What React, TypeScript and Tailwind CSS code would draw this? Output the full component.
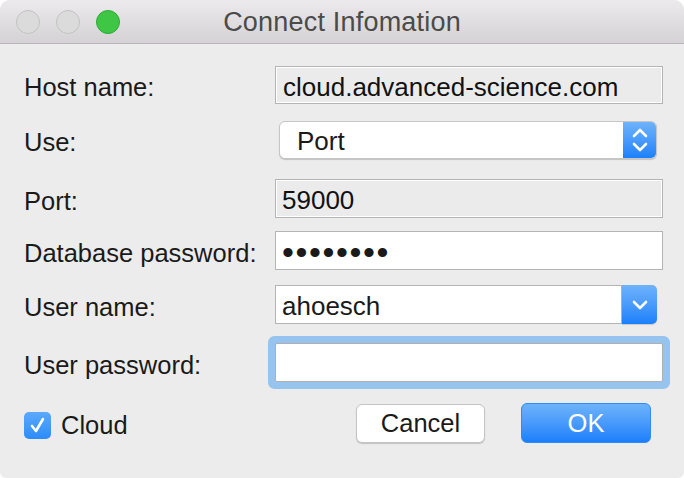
import React from 'react';

const font = "font-['Liberation_Sans','Helvetica_Neue',Arial,sans-serif]";

const Label: React.FC<{ children: React.ReactNode }> = ({ children }) => (
    <div className="w-[251px] mt-[6px] text-[25.5px] leading-none text-[#1a1a1a] whitespace-nowrap">{children}</div>
);

const ChevronUpDown = () => (
    <svg width="16" height="26" viewBox="0 0 16 26" fill="none" stroke="white" strokeWidth="2.6" strokeLinecap="round" strokeLinejoin="round">
        <polyline points="2,9 8,3 14,9" />
        <polyline points="2,17 8,23 14,17" />
    </svg>
);

const ChevronDown = () => (
    <svg width="16" height="12" viewBox="0 0 16 12" fill="none" stroke="white" strokeWidth="2.6" strokeLinecap="round" strokeLinejoin="round">
        <polyline points="2,3 8,9 14,3" />
    </svg>
);

const App: React.FC = () => {
    return (
        <div className={`w-[684px] h-[478px] bg-white ${font}`}>
            <div className="h-full flex flex-col bg-[#ececec] rounded-t-[10px] rounded-b-[6px] overflow-hidden">
                {/* title bar */}
                <header className="h-[44px] shrink-0 grid grid-cols-[1fr_auto_1fr] items-center border-b border-[#b7b7b7] bg-gradient-to-b from-[#eceaec] to-[#d4d2d4]">
                    <div className="flex items-center gap-[16px] pl-[16px]">
                        <span className="w-[24px] h-[24px] rounded-full bg-[#dbdbdb] border border-[#c3c3c3]" />
                        <span className="w-[24px] h-[24px] rounded-full bg-[#dbdbdb] border border-[#c3c3c3]" />
                        <span className="w-[24px] h-[24px] rounded-full bg-[#3fc644] border border-[#2fa937]" />
                    </div>
                    <div className="text-[27px] leading-none text-[#4b4b4b] tracking-[0.2px] mt-[2px]">Connect Infomation</div>
                    <div />
                </header>

                <main className="flex flex-col pl-[24px] pt-[22px]">
                    {/* host name */}
                    <div className="flex items-center h-[38px]">
                        <Label>Host name:</Label>
                        <div className="w-[388px] h-full flex items-center px-[7px] border border-[#b4b4b4] bg-[#ebebeb] shadow-[inset_0_0_0_1px_#ffffff] text-[26px] leading-none text-[#111]">
                            <span className="mt-[3px]">cloud.advanced-science.com</span>
                        </div>
                    </div>

                    {/* use */}
                    <div className="flex items-center h-[38px] mt-[17px]">
                        <Label>Use:</Label>
                        <div className="ml-[4px] w-[378px] h-full flex rounded-[6px] border border-[#c6c6c6] bg-white shadow-[0_1px_1px_rgba(0,0,0,0.18)] overflow-hidden">
                            <div className="flex-1 flex items-center pl-[17px] text-[26px] leading-none text-[#1a1a1a]">
                                <span className="mt-[2px]">Port</span>
                            </div>
                            <div className="w-[33px] flex items-center justify-center bg-gradient-to-b from-[#6eb3fb] to-[#1a80fb]">
                                <ChevronUpDown />
                            </div>
                        </div>
                    </div>

                    {/* port */}
                    <div className="flex items-center h-[39px] mt-[20px]">
                        <Label>Port:</Label>
                        <div className="w-[388px] h-full flex items-center px-[6px] border border-[#b4b4b4] bg-[#ebebeb] shadow-[inset_0_0_0_1px_#ffffff] text-[26px] leading-none text-[#111]">
                            <span className="mt-[3px]">59000</span>
                        </div>
                    </div>

                    {/* database password */}
                    <div className="flex items-center h-[39px] mt-[13px]">
                        <Label>Database password:</Label>
                        <div className="w-[388px] h-full flex items-center px-[6px] border border-[#b4b4b4] bg-white text-[34px] tracking-[1.6px] leading-none text-[#1a1a1a]">
                            <span className="mt-[3px]">••••••••</span>
                        </div>
                    </div>

                    {/* user name */}
                    <div className="flex items-center h-[39px] mt-[15px]">
                        <Label>User name:</Label>
                        <div className="w-[382px] h-full flex">
                            <div className="flex-1 flex items-center px-[6px] border border-[#b3b3b3] bg-white text-[26px] leading-none text-[#1a1a1a]">
                                <span className="mt-[3px]">ahoesch</span>
                            </div>
                            <div className="w-[35px] flex items-center justify-center rounded-r-[5px] bg-gradient-to-b from-[#6eb3fb] to-[#1a80fb] shadow-[0_1px_1px_rgba(0,0,0,0.15)]">
                                <ChevronDown />
                            </div>
                        </div>
                    </div>

                    {/* user password */}
                    <div className="flex items-center h-[39px] mt-[19px]">
                        <Label>User password:</Label>
                        <div className="w-[388px] h-full border border-[#b0b0b0] bg-white rounded-[2px] shadow-[0_0_0_7px_#97c3ef]" />
                    </div>

                    {/* bottom row */}
                    <div className="flex items-center h-[40px] mt-[21px] pr-[33px]">
                        <div className="mt-[5px] w-[27px] h-[27px] rounded-[5px] flex items-center justify-center bg-gradient-to-b from-[#5aa9fb] to-[#2b8cfa]">
                            <svg width="17" height="17" viewBox="0 0 17 17" fill="none" stroke="white" strokeWidth="2.6" strokeLinecap="round" strokeLinejoin="round">
                                <polyline points="3,9 7,14 14,2" />
                            </svg>
                        </div>
                        <span className="ml-[10px] mt-[5px] text-[25.5px] leading-none text-[#1a1a1a]">Cloud</span>
                        <button className="ml-auto w-[129px] h-[39px] rounded-[6px] border border-[#c4c4c4] bg-white shadow-[0_1px_1px_rgba(0,0,0,0.18)] text-[25.5px] leading-none text-[#1a1a1a]">
                            <span className="relative top-[1px]">Cancel</span>
                        </button>
                        <button className="ml-[36px] w-[130px] h-[40px] rounded-[6px] border border-[#2d8cf8] bg-gradient-to-b from-[#6db3fb] to-[#1a7ffb] text-[25.5px] leading-none text-white">
                            <span className="relative top-[1px]">OK</span>
                        </button>
                    </div>
                </main>
            </div>
        </div>
    );
};

export default App;
